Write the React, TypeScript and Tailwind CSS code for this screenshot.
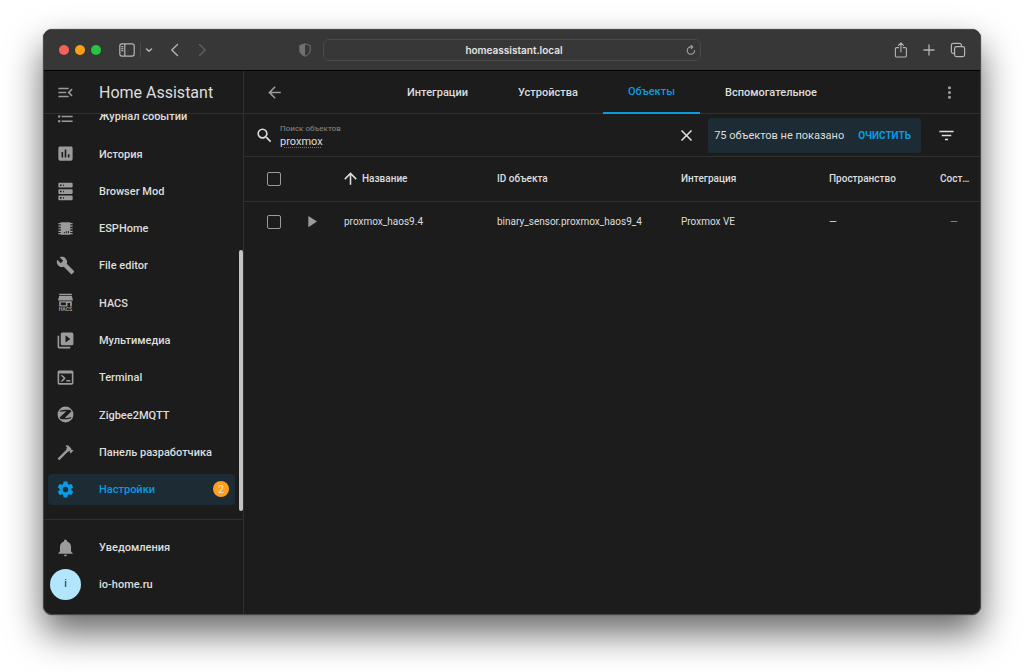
import React, { useState } from "react";

const paths = {
    menuOpen: "M21,15.61L19.59,17L14.58,12L19.59,7L21,8.39L17.44,12L21,15.61M3,6H16V8H3V6M3,13V11H13V13H3M3,18V16H16V18H3Z",
    list: "M7,5H21V7H7V5M7,13V11H21V13H7M4,4.5A1.5,1.5 0 0,1 5.5,6A1.5,1.5 0 0,1 4,7.5A1.5,1.5 0 0,1 2.5,6A1.5,1.5 0 0,1 4,4.5M4,10.5A1.5,1.5 0 0,1 5.5,12A1.5,1.5 0 0,1 4,13.5A1.5,1.5 0 0,1 2.5,12A1.5,1.5 0 0,1 4,10.5M7,19V17H21V19H7M4,16.5A1.5,1.5 0 0,1 5.5,18A1.5,1.5 0 0,1 4,19.5A1.5,1.5 0 0,1 2.5,18A1.5,1.5 0 0,1 4,16.5Z",
    chartBox: "M9 17H7V10H9V17M13 17H11V7H13V17M17 17H15V13H17V17M19 3H5C3.9 3 3 3.9 3 5V19C3 20.1 3.9 21 5 21H19C20.1 21 21 20.1 21 19V5C21 3.9 20.1 3 19 3Z",
    server: "M4,1H20A1,1 0 0,1 21,2V6A1,1 0 0,1 20,7H4A1,1 0 0,1 3,6V2A1,1 0 0,1 4,1M4,9H20A1,1 0 0,1 21,10V14A1,1 0 0,1 20,15H4A1,1 0 0,1 3,14V10A1,1 0 0,1 4,9M4,17H20A1,1 0 0,1 21,18V22A1,1 0 0,1 20,23H4A1,1 0 0,1 3,22V18A1,1 0 0,1 4,17M9,5H10V3H9V5M9,13H10V11H9V13M9,21H10V19H9V21M5,3V5H7V3H5M5,11V13H7V11H5M5,19V21H7V19H5Z",
    chip: "M6,4H18V5H21V6.5H18V8.3H21V9.8H18V11.6H21V13.1H18V14.9H21V16.4H18V17.8H21V19.3H18V20H6V19.3H3V17.8H6V16.4H3V14.9H6V13.1H3V11.6H6V9.8H3V8.3H6V6.5H3V5H6V4M10,16.5V18H11.2V16.5H10M12.5,15.5V18H13.7V15.5H12.5M15,15V18H16.2V15H15Z",
    wrench: "M22.7,19L13.6,9.9C14.5,7.6 14,4.9 12.1,3C10.1,1 7.1,0.6 4.7,1.7L9,6L6,9L1.6,4.7C0.4,7.1 0.9,10.1 2.9,12.1C4.8,14 7.5,14.5 9.8,13.6L18.9,22.7C19.3,23.1 19.9,23.1 20.3,22.7L22.6,20.4C23.1,20 23.1,19.3 22.7,19Z",
    media: "M4,6H2V20A2,2 0 0,0 4,22H18V20H4V6M20,2H8A2,2 0 0,0 6,4V16A2,2 0 0,0 8,18H20A2,2 0 0,0 22,16V4A2,2 0 0,0 20,2M12,14.5V5.5L18,10L12,14.5Z",
    console: "M20,19V7H4V19H20M20,3A2,2 0 0,1 22,5V19A2,2 0 0,1 20,21H4A2,2 0 0,1 2,19V5C2,3.89 2.9,3 4,3H20M13,17V15H18V17H13M9.58,13L5.57,9H8.4L11.7,12.3C12.09,12.69 12.09,13.33 11.7,13.72L8.42,17H5.59L9.58,13Z",
    zigbee: "M12,2A10,10 0 0,1 22,12A10,10 0 0,1 12,22A10,10 0 0,1 2,12A10,10 0 0,1 12,2M5.5,7C9,6 14,5.6 18.5,6.4L19.4,8.2L11,16.3C14,16.5 17,16.1 19.6,15.2L18.6,17C14,18.3 9,18.4 5.6,17.6L4.6,15.8L13,7.8C10,7.7 7.5,7.9 4.4,8.6Z",
    hammer: "M2,19.63L13.43,8.2L12.72,7.5L14.14,6.07L12,3.89C13.2,2.7 15.09,2.7 16.27,3.89L19.87,7.5L18.45,8.91H21.29L22,9.62L18.45,13.21L17.74,12.5V9.62L16.27,11.04L15.56,10.33L4.13,21.76L2,19.63Z",
    cog: "M12,15.5A3.5,3.5 0 0,1 8.5,12A3.5,3.5 0 0,1 12,8.5A3.5,3.5 0 0,1 15.5,12A3.5,3.5 0 0,1 12,15.5M19.43,12.97C19.47,12.65 19.5,12.33 19.5,12C19.5,11.67 19.47,11.34 19.43,11L21.54,9.37C21.73,9.22 21.78,8.95 21.66,8.73L19.66,5.27C19.54,5.05 19.27,4.96 19.05,5.05L16.56,6.05C16.04,5.66 15.5,5.32 14.87,5.07L14.5,2.42C14.46,2.18 14.25,2 14,2H10C9.75,2 9.54,2.18 9.5,2.42L9.13,5.07C8.5,5.32 7.96,5.66 7.44,6.05L4.95,5.05C4.73,4.96 4.46,5.05 4.34,5.27L2.34,8.73C2.21,8.95 2.27,9.22 2.46,9.37L4.57,11C4.53,11.34 4.5,11.67 4.5,12C4.5,12.33 4.53,12.65 4.57,12.97L2.46,14.63C2.27,14.78 2.21,15.05 2.34,15.27L4.34,18.73C4.46,18.95 4.73,19.03 4.95,18.95L7.44,17.94C7.96,18.34 8.5,18.68 9.13,18.93L9.5,21.58C9.54,21.82 9.75,22 10,22H14C14.25,22 14.46,21.82 14.5,21.58L14.87,18.93C15.5,18.67 16.04,18.34 16.56,17.94L19.05,18.95C19.27,19.03 19.54,18.95 19.66,18.73L21.66,15.27C21.78,15.05 21.73,14.78 21.54,14.63L19.43,12.97Z",
    bell: "M21,19V20H3V19L5,17V11C5,7.9 7.03,5.17 10,4.29C10,4.19 10,4.1 10,4A2,2 0 0,1 12,2A2,2 0 0,1 14,4C14,4.1 14,4.19 14,4.29C16.97,5.17 19,7.9 19,11V17L21,19M14,21A2,2 0 0,1 12,23A2,2 0 0,1 10,21",
    magnify: "M9.5,3A6.5,6.5 0 0,1 16,9.5C16,11.11 15.41,12.59 14.44,13.73L14.71,14H15.5L20.5,19L19,20.5L14,15.5V14.71L13.73,14.44C12.59,15.41 11.11,16 9.5,16A6.5,6.5 0 0,1 3,9.5A6.5,6.5 0 0,1 9.5,3M9.5,5C7,5 5,7 5,9.5C5,12 7,14 9.5,14C12,14 14,12 14,9.5C14,7 12,5 9.5,5Z",
    arrowLeft: "M20,11V13H8L13.5,18.5L12.08,19.92L4.16,12L12.08,4.08L13.5,5.5L8,11H20Z",
    arrowUp: "M13,20H11V8L5.5,13.5L4.08,12.08L12,4.16L19.92,12.08L18.5,13.5L13,8V20Z",
    close: "M19,6.41L17.59,5L12,10.59L6.41,5L5,6.41L10.59,12L5,17.59L6.41,19L12,13.41L17.59,19L19,17.59L13.41,12L19,6.41Z",
    filter: "M6,13H18V11H6M3,6V8H21V6M10,18H14V16H10V18Z",
    dots: "M12,16A2,2 0 0,1 14,18A2,2 0 0,1 12,20A2,2 0 0,1 10,18A2,2 0 0,1 12,16M12,10A2,2 0 0,1 14,12A2,2 0 0,1 12,14A2,2 0 0,1 10,12A2,2 0 0,1 12,10M12,4A2,2 0 0,1 14,6A2,2 0 0,1 12,8A2,2 0 0,1 10,6A2,2 0 0,1 12,4Z",
    play: "M8,5.14V19.14L19,12.14L8,5.14Z",
};

type IconName = keyof typeof paths;

const Icon: React.FC<{ name: IconName; className?: string }> = ({ name, className = "" }) => (
    <svg viewBox="0 0 24 24" fill="currentColor" fillRule="evenodd" aria-hidden="true" className={"size-[19px] shrink-0 " + className}>
        <path d={paths[name]} />
    </svg>
);

const HacsIcon: React.FC = () => (
    <svg viewBox="0 0 24 24" fill="currentColor" aria-hidden="true" className="size-[19px] shrink-0">
        <path d="M4,1H20V2.6H4ZM4,3.4H20L21.5,9.5H2.5ZM4,10.5H20V17H17.8V12.5H14.5V17H4ZM6,12V15.5H12.5V12Z" fillRule="evenodd" />
        <text x="12" y="23" textAnchor="middle" fontSize="6.5" fontFamily="Roboto, sans-serif" fontWeight="700">HACS</text>
    </svg>
);

const menu: { label: string; icon: IconName | "hacs"; badge?: number }[] = [
    { label: "Журнал событий", icon: "list" },
    { label: "История", icon: "chartBox" },
    { label: "Browser Mod", icon: "server" },
    { label: "ESPHome", icon: "chip" },
    { label: "File editor", icon: "wrench" },
    { label: "HACS", icon: "hacs" },
    { label: "Мультимедиа", icon: "media" },
    { label: "Terminal", icon: "console" },
    { label: "Zigbee2MQTT", icon: "zigbee" },
    { label: "Панель разработчика", icon: "hammer" },
    { label: "Настройки", icon: "cog", badge: 2 },
];

const tabs = ["Интеграции", "Устройства", "Объекты", "Вспомогательное"];

const BrowserBar: React.FC = () => (
    <div className="grid h-[41px] shrink-0 grid-cols-[1fr_378px_1fr] items-center border-b border-black bg-[#373737] text-[#b4b4b4]">
        <div className="flex items-center pl-[15px] pr-3">
            <div className="flex gap-[6px]">
                <span className="size-[10px] rounded-full bg-[#f4605a]" />
                <span className="size-[10px] rounded-full bg-[#fd9f14]" />
                <span className="size-[10px] rounded-full bg-[#27c53f]" />
            </div>
            <button aria-label="Боковая панель" className="ml-[18px]">
                <svg viewBox="0 0 16 14" className="h-[14px] w-4" fill="none" stroke="currentColor" strokeWidth="1.2">
                    <rect x="0.8" y="0.9" width="14.4" height="12.2" rx="2" />
                    <path d="M5.8 1v12M2.3 3.6h2M2.3 5.6h2M2.3 7.6h2" />
                </svg>
            </button>
            <span className="ml-[5px] h-[14px] w-px bg-[#4a4a4a]" />
            <button aria-label="Группы вкладок" className="ml-1">
                <svg viewBox="0 0 8 8" className="size-2" fill="none" stroke="currentColor" strokeWidth="1.5" strokeLinecap="round" strokeLinejoin="round">
                    <path d="M1.5 3L4 5.3L6.5 3" />
                </svg>
            </button>
            <button aria-label="Назад" className="ml-[17px]">
                <svg viewBox="0 0 9 14" className="h-[14px] w-[9px]" fill="none" stroke="currentColor" strokeWidth="1.4" strokeLinecap="round" strokeLinejoin="round">
                    <path d="M7.5 1.5L1.8 7L7.5 12.5" />
                </svg>
            </button>
            <button aria-label="Вперёд" className="ml-[19px] text-[#606060]">
                <svg viewBox="0 0 9 14" className="h-[14px] w-[9px]" fill="none" stroke="currentColor" strokeWidth="1.4" strokeLinecap="round" strokeLinejoin="round">
                    <path d="M1.5 1.5L7.2 7L1.5 12.5" />
                </svg>
            </button>
            <button aria-label="Отчёт о конфиденциальности" className="ml-auto text-[#717171]">
                <svg viewBox="0 0 12 14" className="h-[14px] w-3">
                    <path d="M6 .8L11.2 2.5V7.5C11.2 10.3 8.6 12.3 6 13.3C3.4 12.3 .8 10.3 .8 7.5V2.5Z" fill="none" stroke="currentColor" strokeWidth="1" />
                    <path d="M6 .8V13.3C3.4 12.3 .8 10.3 .8 7.5V2.5Z" fill="currentColor" />
                </svg>
            </button>
        </div>
        <div className="flex h-[22px] items-center rounded-md border border-[#4a4a4a] px-1">
            <span className="flex-1 pl-[14px] text-center font-[Inter,sans-serif] text-[10px] font-semibold text-[#e4e4e4]">homeassistant.local</span>
            <button aria-label="Обновить" className="text-[#a0a0a0]">
                <svg viewBox="0 0 10 10" className="size-[10px]" fill="none" stroke="currentColor" strokeWidth="1.1" strokeLinecap="round" strokeLinejoin="round">
                    <path d="M8.6 5.6A3.7 3.7 0 1 1 5 1.9H6.6M5 .5L6.8 1.9L5.2 3.6" />
                </svg>
            </button>
        </div>
        <div className="flex items-center justify-end gap-[14px] pr-[14px]">
            <button aria-label="Поделиться">
                <svg viewBox="0 0 14 16" className="h-4 w-[14px]" fill="none" stroke="currentColor" strokeWidth="1.1" strokeLinecap="round" strokeLinejoin="round">
                    <path d="M4.6 5.6H2.6A1.2 1.2 0 0 0 1.4 6.8V13.8A1.2 1.2 0 0 0 2.6 15H11.2A1.2 1.2 0 0 0 12.4 13.8V6.8A1.2 1.2 0 0 0 11.2 5.6H9.2M6.9 10V1M4.4 3.3L6.9 .9L9.4 3.3" />
                </svg>
            </button>
            <button aria-label="Новая вкладка">
                <svg viewBox="0 0 14 14" className="size-[14px]" fill="none" stroke="currentColor" strokeWidth="1.3" strokeLinecap="round">
                    <path d="M7 1.9V12.1M1.9 7H12.1" />
                </svg>
            </button>
            <button aria-label="Обзор вкладок">
                <svg viewBox="0 0 16 16" className="size-4" fill="none" stroke="currentColor" strokeWidth="1.2">
                    <rect x="4.6" y="4.6" width="10" height="10" rx="1.8" />
                    <path d="M4.6 11.4H3.2A1.8 1.8 0 0 1 1.4 9.6V3.2A1.8 1.8 0 0 1 3.2 1.4H9.6A1.8 1.8 0 0 1 11.4 3.2V4.6" />
                </svg>
            </button>
        </div>
    </div>
);

const Sidebar: React.FC = () => (
    <aside className="flex w-[200px] shrink-0 flex-col border-r border-[#303030]">
        <div className="flex h-[43px] shrink-0 items-center gap-6 border-b border-[#303030] pl-3 text-[#9b9b9b]">
            <button aria-label="Свернуть меню"><Icon name="menuOpen" /></button>
            <h1 className="pt-0.5 text-base text-[#dedede]">Home Assistant</h1>
        </div>
        <nav className="flex flex-1 overflow-hidden border-b border-[#303030]">
            {/* the list is scrolled, so its first row is partly under the header */}
            <ul className="-mt-4 flex flex-1 flex-col px-1 pb-[11px]">
                {menu.map((item) => (
                    <li key={item.label} className="flex flex-1 items-center">
                        <a
                            href="#"
                            className={item.badge
                                ? "flex h-[31px] w-full items-center gap-6 rounded bg-[#1c2b34] px-2 text-[#0a9be0]"
                                : "flex h-[31px] w-full items-center gap-6 rounded px-2 text-[#9b9b9b]"}
                        >
                            {item.icon === "hacs" ? <HacsIcon /> : <Icon name={item.icon} />}
                            <span className={item.badge ? "pt-0.5 text-[11px] font-medium" : "pt-0.5 text-[11px] font-medium whitespace-nowrap text-[#dedede]"}>{item.label}</span>
                            {item.badge && (
                                <span className="-mr-0.5 ml-auto flex size-4 items-center justify-center rounded-full bg-[#ff9f1a] text-[10px] text-[#e8e8e8]">{item.badge}</span>
                            )}
                        </a>
                    </li>
                ))}
            </ul>
            <div className="flex w-1 flex-col pt-[136px] pb-2">
                <div className="flex-1 rounded-full bg-[#c3c3c3]" />
            </div>
        </nav>
        <div className="flex shrink-0 flex-col pt-[9px] pb-[11px] text-[11px] font-medium text-[#dedede]">
            <a href="#" className="flex h-[37px] items-center gap-6 pl-3">
                <Icon name="bell" className="text-[#9b9b9b]" />
                <span className="pt-0.5">Уведомления</span>
            </a>
            <a href="#" className="flex h-[37px] items-center gap-[18px] pl-[6px]">
                <span className="flex size-[31px] items-center justify-center rounded-full bg-[#b3e5fc] font-normal text-[#212121]">i</span>
                <span className="pt-0.5">io-home.ru</span>
            </a>
        </div>
    </aside>
);

const Checkbox: React.FC<{ label: string }> = ({ label }) => (
    <input type="checkbox" aria-label={label} className="block size-[14px] appearance-none rounded-xs border border-[#9b9b9b] checked:bg-[#0a9be0]" />
);

const EntitiesTable: React.FC = () => (
    <table className="w-full table-fixed text-left text-[10px] text-[#dedede]">
        <colgroup>
            <col className="w-[55px]" />
            <col className="w-[33px]" />
            <col className="w-[153px]" />
            <col />
            <col className="w-[148px]" />
            <col className="w-[111px]" />
            <col className="w-[52px]" />
        </colgroup>
        <thead>
            <tr className="h-11 border-b border-[#303030] [&>th]:font-medium">
                <th className="pl-[23px]"><Checkbox label="Выбрать все" /></th>
                <th />
                <th className="pl-[9px]">
                    <button className="flex items-center">
                        <Icon name="arrowUp" className="mr-[2px]" />
                        Название
                    </button>
                </th>
                <th className="pl-3">ID объекта</th>
                <th className="pl-3">Интеграция</th>
                <th className="pl-3">Пространство</th>
                <th className="truncate pr-2 pl-3">Состояние</th>
            </tr>
        </thead>
        <tbody>
            <tr className="h-[41px]">
                <td className="pl-[23px]"><Checkbox label="proxmox_haos9.4" /></td>
                <td><Icon name="play" className="ml-[3px] text-[#9b9b9b]" /></td>
                <td className="pl-3">proxmox_haos9.4</td>
                <td className="pl-3">binary_sensor.proxmox_haos9_4</td>
                <td className="pl-3">Proxmox VE</td>
                <td className="pl-3">—</td>
                <td className="text-center text-[#8a8a8a]">—</td>
            </tr>
        </tbody>
    </table>
);

const App: React.FC = () => {
    const [search, setSearch] = useState("proxmox");

    return (
        <div className="flex min-h-screen bg-white px-[43px] pt-[29px] pb-[57px] font-[Roboto,sans-serif]">
            <div className="flex min-w-0 flex-1 flex-col overflow-hidden rounded-[9px] border border-[#484848] bg-[#1c1c1c] shadow-[0_18px_36px_rgba(0,0,0,0.6),0_0_1px_rgba(0,0,0,0.8)]">
                <BrowserBar />
                <div className="flex flex-1">
                    <Sidebar />
                    <main className="flex min-w-0 flex-1 flex-col">
                        <header className="flex h-[43px] items-stretch justify-between border-b border-[#303030] px-[21px] text-[#9b9b9b]">
                            <button aria-label="Назад"><Icon name="arrowLeft" /></button>
                            <nav className="flex">
                                {tabs.map((tab) => (
                                    <a
                                        key={tab}
                                        href="#"
                                        className={tab === "Объекты"
                                            ? "-mb-px flex items-center border-b-2 border-[#0a9be0] px-[25px] pt-0.5 text-[11px] font-medium text-[#0a9be0]"
                                            : "flex items-center px-[25px] pt-0.5 text-[11px] font-medium text-[#dedede]"}
                                    >
                                        {tab}
                                    </a>
                                ))}
                            </nav>
                            <button aria-label="Меню"><Icon name="dots" /></button>
                        </header>
                        <div className="flex h-[43px] items-center border-b border-[#303030] pr-6 pl-[11px] text-[#dedede]">
                            <Icon name="magnify" />
                            <div className="ml-[6px] flex min-w-0 flex-1 flex-col pt-1">
                                <label htmlFor="search" className="text-[8px] leading-[10px] text-[#8a8a8a]">Поиск объектов</label>
                                <input
                                    id="search"
                                    value={search}
                                    onChange={(e) => setSearch(e.target.value)}
                                    className="h-4 w-full bg-transparent text-[11px] leading-4 underline decoration-[#d0453e] decoration-dotted underline-offset-2 outline-none"
                                />
                            </div>
                            <button aria-label="Сбросить" onClick={() => setSearch("")}><Icon name="close" /></button>
                            <div className="ml-3 flex h-[35px] items-center gap-[14px] rounded-[3px] bg-[#1c2b34] px-[6px] pr-[10px]">
                                <span className="pt-0.5 text-[11px]">75 объектов не показано</span>
                                <button className="text-[10px] font-bold text-[#0a9be0] uppercase">Очистить</button>
                            </div>
                            <button aria-label="Фильтр" className="ml-4"><Icon name="filter" /></button>
                        </div>
                        <EntitiesTable />
                    </main>
                </div>
            </div>
        </div>
    );
}

export default App;
